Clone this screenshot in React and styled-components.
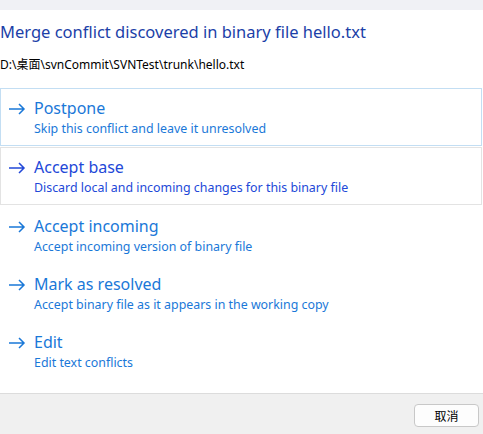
import React from 'react'
import styled, { createGlobalStyle } from 'styled-components'

const Global = createGlobalStyle`
  html, body { margin:0; padding:0; background:#fff; }
  body { font-family:"Noto Sans","Noto Sans CJK SC",sans-serif; }
`

const Dialog = styled.div`
  width:483px;
  height:434px;
  display:flex;
  flex-direction:column;
  background:#fff;
  overflow:hidden;
`

const TopBand = styled.div`
  height:10px;
  background:#f0f1f5;
`

const Body = styled.div`
  flex:1;
  display:flex;
  flex-direction:column;
  padding-top:11px;
`

const Title = styled.h1`
  margin:0;
  font-size:16.5px;
  font-weight:400;
  color:#1c3fa8;
  line-height:22px;
`

const Path = styled.div`
  margin-top:14px;
  font-size:12px;
  color:#000;
  line-height:16px;
`

const Options = styled.div`
  margin-top:15px;
  display:flex;
  flex-direction:column;
  margin-right:1px;
`

const Option = styled.div`
  display:grid;
  grid-template-columns:33px 1fr;
  height:58px;
  box-sizing:border-box;
  padding-top:8px;
  border:1px solid ${p => p.$border || 'transparent'};
  margin-bottom:${p => (p.$border ? '1px' : '0')};
  color:${p => p.$color || '#1a78d8'};
`

const Arrow = styled.svg`
  width:18px;
  height:12px;
  margin:6px 0 0 7px;
`

const Label = styled.div`
  font-size:16px;
  line-height:22px;
`

const Note = styled.div`
  margin-top:2px;
  font-size:12.4px;
  line-height:16px;
`

const Footer = styled.div`
  height:41px;
  border-top:1px solid #dcdcdc;
  background:#f0f0f0;
  display:flex;
  justify-content:flex-end;
  align-items:flex-start;
  padding:10px 4px 0 0;
  box-sizing:border-box;
`

const Button = styled.button`
  width:65px;
  height:23px;
  border:1px solid #c8c8c8;
  border-radius:4px;
  background:#fdfdfd;
  font-family:"Noto Sans CJK SC",sans-serif;
  font-size:12px;
  color:#000;
  padding:0;
`

const items = [
  { label: 'Postpone', note: 'Skip this conflict and leave it unresolved', border: '#c3def3' },
  { label: 'Accept base', note: 'Discard local and incoming changes for this binary file', border: '#e3e3e3', color: '#2248d8' },
  { label: 'Accept incoming', note: 'Accept incoming version of binary file' },
  { label: 'Mark as resolved', note: 'Accept binary file as it appears in the working copy' },
  { label: 'Edit', note: 'Edit text conflicts' },
]

const App = () => {
  return (
    <Dialog>
      <Global />
      <TopBand />
      <Body>
        <Title>Merge conflict discovered in binary file hello.txt</Title>
        <Path>D:\桌面\svnCommit\SVNTest\trunk\hello.txt</Path>
        <Options>
          {items.map(it => (
            <Option key={it.label} $border={it.border} $color={it.color}>
              <Arrow viewBox="0 0 18 12">
                <path d="M1 6h15M11 1l5 5-5 5" fill="none" stroke="currentColor" strokeWidth="1.5" />
              </Arrow>
              <div>
                <Label>{it.label}</Label>
                <Note>{it.note}</Note>
              </div>
            </Option>
          ))}
        </Options>
      </Body>
      <Footer>
        <Button>取消</Button>
      </Footer>
    </Dialog>
  )
}

export default App
